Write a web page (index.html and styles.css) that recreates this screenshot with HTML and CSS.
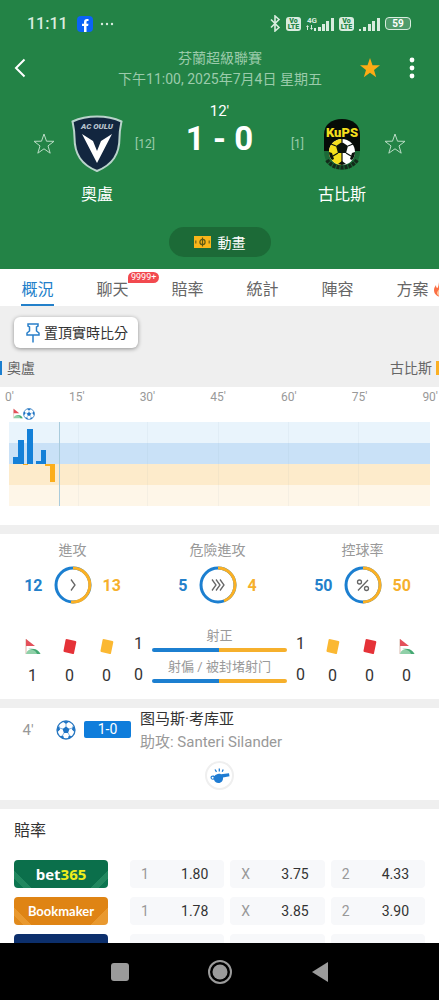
FILE: index.html
```html
<!DOCTYPE html>
<html lang="zh-Hant">
<head>
    <meta charset="UTF-8">
    <meta name="viewport" content="width=device-width, initial-scale=1.0">
    <title>奧盧 1 - 0 古比斯</title>
    <link rel="stylesheet" href="styles.css">
</head>
<body>
    <!-- Shared icons -->
    <svg class="sprite" aria-hidden="true">
        <symbol id="star" viewBox="0 0 22 22">
            <path d="M11 1l2.500 7.200 7.500.1-6 4.600 2.200 7.300L11 15.800l-6.200 4.400L7 12.900 1 8.300l7.500-.1z"/>
        </symbol>
        <symbol id="ball" viewBox="0 0 20 20">
            <circle cx="10" cy="10" r="9" fill="#fff" stroke="#2a78c0" stroke-width="1.300"/>
            <path fill="#1f74c4" d="M10 6.500l3.400 2.500-1.300 4H7.900L6.600 9zM6.500 1.300h7L10 4zM1 7.500L3.200 6l.9 3.600-2.800 2.600zM19 7.500L16.800 6l-.9 3.600 2.800 2.600zM3.500 16l3.800-.3.800 3-2.500-.4zM16.500 16l-3.800-.3-.8 3 2.500-.4z"/>
            <path fill="none" stroke="#5b9bd6" stroke-width=".8" d="M10 7V3.500M13 9l3.500-1M12 13l2 3.200M8 13l-2 3.200M7 9L3.500 8"/>
        </symbol>
        <symbol id="corner" viewBox="0 0 16 17">
            <path d="M1 1v15" stroke="#d9b8ac"/>
            <path d="M1 1l9 7H1z" fill="#e3505a"/>
            <path d="M1 16c1-4 4-5 7-5 4 0 6 2 7.500 5z" fill="#8fd0a8"/>
            <path d="M3 11c5 0 8 2 9 5h3.500C13 11.500 9 10 3 11z" fill="#45a873"/>
        </symbol>
        <symbol id="card" viewBox="0 0 14 16">
            <path d="M3.500.5l9 2a1 1 0 0 1 .8 1.200L11 14.700a1 1 0 0 1-1.200.8l-8.500-2a1 1 0 0 1-.8-1.200L2.600 1.200a1 1 0 0 1 .9-.7z"/>
        </symbol>
    </svg>

    <header class="match-header">
        <div class="status-bar">
            <span class="clock">11:11</span>
            <svg class="fb" viewBox="0 0 16 16">
                <rect width="16" height="16" rx="4" fill="#0b63f6"/>
                <path d="M7 16v-6H5V7.700h2V6.200C7 4.100 8.200 3 10 3l1.500.1v2h-1C9.700 5.100 9.500 5.600 9.500 6.300v1.400h2L11.100 10H9.500v6z" fill="#fff"/>
            </svg>
            <svg class="more" viewBox="0 0 14 4" fill="#d9ecdf">
                <circle cx="2" cy="2" r="1.200"/><circle cx="7" cy="2" r="1.200"/><circle cx="12" cy="2" r="1.200"/>
            </svg>
            <div class="status-icons">
                <svg width="11" height="17" viewBox="0 0 11 17" fill="none" stroke="#d9ecdf" stroke-width="1.600">
                    <path d="M1 4.500l8 8-4 3.500V1l4 3.500-8 8"/>
                </svg>
                <span class="volte">Vo<br>LTE</span>
                <svg width="28" height="16" viewBox="0 0 28 16" fill="#d9ecdf">
                    <text x="1" y="7" font-size="8" font-weight="700">4G</text>
                    <path d="M0 11l1.500-2L3 11H2v3H1v-3zM4 12h1V9h1v3h1l-1.500 2zM8 12h2v3H8zM12 11h3v4h-3zM16 8h3v7h-3zM20 5h3v10h-3zM25 2h3v13h-3z"/>
                </svg>
                <span class="volte">Vo<br>LTE</span>
                <svg width="21" height="16" viewBox="0 0 21 16" fill="#d9ecdf">
                    <path d="M0 13h2v2H0zM4 11h3v4H4zM9 8h3v7H9zM13 5h3v10h-3zM18 2h3v13h-3z"/>
                </svg>
                <span class="battery">59</span>
            </div>
        </div>

        <div class="top-bar">
            <button class="icon-btn" aria-label="返回">
                <svg width="12" height="20" viewBox="0 0 12 20" fill="none" stroke="#fff" stroke-width="2">
                    <path d="M10.500 1.500L2 10l8.500 8.500"/>
                </svg>
            </button>
            <div class="league">
                <p>芬蘭超級聯賽</p>
                <p>下午11:00, 2025年7月4日 星期五</p>
            </div>
            <button class="icon-btn favourite" aria-label="收藏">
                <svg width="22" height="22"><use href="#star"/></svg>
            </button>
            <button class="icon-btn" aria-label="更多">
                <svg width="6" height="22" viewBox="0 0 6 22" fill="#fff">
                    <circle cx="3" cy="3" r="2.400"/><circle cx="3" cy="11" r="2.400"/><circle cx="3" cy="19" r="2.400"/>
                </svg>
            </button>
        </div>

        <div class="scoreboard">
            <div class="team">
                <button class="icon-btn follow" aria-label="關注奧盧">
                    <svg width="22" height="22"><use href="#star"/></svg>
                </button>
                <svg class="crest" viewBox="0 0 52 58">
                    <path d="M26 1.500c9 0 17 1.500 24.500 5-1 5-2 9-2 16 0 17-7 27-22.500 33.500C10.500 49.500 3.500 39.500 3.500 22.500c0-7-1-11-2-16C9 3 17 1.500 26 1.500z" fill="#12263f" stroke="#b9d3cb" stroke-width="2"/>
                    <path d="M11 19l11 7 4 10 4-10 11-7-15 29z" fill="#fff"/>
                    <text x="26" y="14" font-size="8" font-weight="900" font-style="italic" text-anchor="middle" fill="#b7c3cd">AC OULU</text>
                </svg>
                <span class="rank">[12]</span>
                <strong class="team-name">奧盧</strong>
            </div>
            <div class="score">
                <span class="minute">12'</span>
                <strong>1 - 0</strong>
            </div>
            <div class="team away">
                <span class="rank">[1]</span>
                <svg class="crest" viewBox="0 0 52 58">
                    <path d="M8 36V20C8 9 16 4 26 4s18 5 18 16v16c0 12-8 19-18 19S8 48 8 36z" fill="#1c6a37"/>
                    <path d="M8 36V20C8 9 16 4 26 4s18 5 18 16v16z" fill="#060b07"/>
                    <path d="M11 45c6 10 24 10 30 0" fill="none" stroke="#132a1a" stroke-width="4" stroke-dasharray="3 1"/>
                    <circle cx="26" cy="37" r="13" fill="#fff"/>
                    <path d="M26 24v26a13 13 0 0 1 0-26z" fill="#f4df1d"/>
                    <path d="M26 27l6 4-2 7h-8l-2-7z" fill="#0a120c"/>
                    <path d="M13 37l3 1 2 6-2 1c-2-2-3-5-3-8zM39 37l-3 1-2 6 2 1c2-2 3-5 3-8zM22 49l4-3 4 3-4 1z" fill="#0a120c"/>
                    <path d="M26 27v-3M20 31l-5-2M32 31l5-2M22 38l-5 3M30 38l5 3M26 38v9" stroke="#0a120c" stroke-width="1.200"/>
                    <text x="26" y="22" font-size="13" font-weight="900" text-anchor="middle" fill="#f4df1d">KuPS</text>
                </svg>
                <button class="icon-btn follow" aria-label="關注古比斯">
                    <svg width="22" height="22"><use href="#star"/></svg>
                </button>
                <strong class="team-name">古比斯</strong>
            </div>
        </div>

        <button class="animation-btn">
            <svg width="17" height="12" viewBox="0 0 17 12">
                <rect width="17" height="12" fill="#f9b61a"/>
                <path d="M8.500 1.500v9" stroke="#5b5714" stroke-width="1.200"/>
                <circle cx="8.500" cy="6" r="2.600" fill="none" stroke="#5b5714" stroke-width="1.200"/>
                <path d="M1 4.500h1.500v3H1zM14.500 4.500H16v3h-1.500z" fill="#8c741a"/>
            </svg>
            動畫
        </button>
    </header>

    <nav class="tabs">
        <a href="#overview" class="tab active">概況</a>
        <a href="#chat" class="tab">聊天<span class="badge">9999+</span></a>
        <a href="#odds" class="tab">賠率</a>
        <a href="#stats" class="tab">統計</a>
        <a href="#lineup" class="tab">陣容</a>
        <a href="#tips" class="tab">方案
            <svg class="flame" viewBox="0 0 14 18">
                <path d="M7 0c1 4 6 6 6 11 0 4-3 6.500-6 6.500S1 15 1 11c0-2 1-3.500 2-5 0 2 .5 3 1.500 3C6 7 5.500 3 7 0z" fill="#fb6f45"/>
                <path d="M7 9c1 2 3 3 3 5 0 2-1.500 3-3 3s-3-1-3-3 2-3 3-5z" fill="#ffc9a0"/>
            </svg>
        </a>
    </nav>

    <main class="content" id="overview">
        <div class="pin-row">
            <button class="pin-btn">
                <svg width="14" height="20" viewBox="0 0 14 20" fill="none" stroke="#2a7fc9" stroke-width="1.500">
                    <path d="M2 1h10v2l-1.500 1v4L13 10v2H1v-2l2.500-2V4L2 3zM7 12v7.500"/>
                </svg>
                置頂實時比分
            </button>
        </div>

        <div class="teams-legend">
            <span class="home">奧盧</span>
            <span class="guest">古比斯</span>
        </div>

        <section class="timeline">
            <div class="minutes">
                <span>0'</span><span>15'</span><span>30'</span><span>45'</span><span>60'</span><span>75'</span><span>90'</span>
            </div>
            <div class="incidents">
                <svg width="10" height="11"><use href="#corner"/></svg>
                <svg width="12" height="12"><use href="#ball"/></svg>
            </div>
            <svg class="momentum" viewBox="0 0 421 84" preserveAspectRatio="none" shape-rendering="crispEdges">
                <rect width="421" height="21" fill="#e9f4fc"/>
                <rect y="21" width="421" height="21" fill="#c9e1f7"/>
                <rect y="42" width="421" height="21" fill="#fdebcb"/>
                <rect y="63" width="421" height="21" fill="#fef6e8"/>
                <path d="M69 0v84M138 0v84M209 0v84M279 0v84M349 0v84" stroke="#8099aa" stroke-opacity=".07"/>
                <path d="M50 0v84" stroke="#a9cbdc"/>
                <path d="M4 35h5V18h6v24H4zM18 7h6v35h-6zM27 39h5V28h5v14H27z" fill="#1480d8"/>
                <path d="M14 42h5v1h-5zM36 42h10v18h-5V44h-5z" fill="#fcae1c"/>
            </svg>
        </section>

        <section class="panel stats" id="stats">
            <div class="gauges">
                <div class="gauge">
                    <h3>進攻</h3>
                    <b class="blue">12</b>
                    <svg class="ring" viewBox="0 0 38 38">
                        <circle cx="19" cy="19" r="17" stroke="#1c7fd0"/>
                        <path d="M19 2a17 17 0 1 1-2 33.900" stroke="#fbb024"/>
                        <path class="glyph" d="M17 13.500l4 5.500-4 5.500"/>
                    </svg>
                    <b class="yellow">13</b>
                </div>
                <div class="gauge">
                    <h3>危險進攻</h3>
                    <b class="blue">5</b>
                    <svg class="ring" viewBox="0 0 38 38">
                        <circle cx="19" cy="19" r="17" stroke="#1c7fd0"/>
                        <path d="M19 2a17 17 0 0 1 6 32.900" stroke="#fbb024"/>
                        <path class="glyph" d="M13 13.500l4 5.500-4 5.500M17 13.500l4 5.500-4 5.500M21 13.500l4 5.500-4 5.500"/>
                    </svg>
                    <b class="yellow">4</b>
                </div>
                <div class="gauge">
                    <h3>控球率</h3>
                    <b class="blue">50</b>
                    <svg class="ring" viewBox="0 0 38 38">
                        <circle cx="19" cy="19" r="17" stroke="#1c7fd0"/>
                        <path d="M19 2a17 17 0 0 1 0 34" stroke="#fbb024"/>
                        <path class="glyph" d="M24 14L14 24.500M17.500 16a2 2 0 1 1-4 0 2 2 0 0 1 4 0zM24.500 22.500a2 2 0 1 1-4 0 2 2 0 0 1 4 0z"/>
                    </svg>
                    <b class="yellow">50</b>
                </div>
            </div>

            <div class="counts">
                <div class="count"><svg class="corner"><use href="#corner"/></svg>1</div>
                <div class="count"><svg class="card red"><use href="#card"/></svg>0</div>
                <div class="count"><svg class="card amber"><use href="#card"/></svg>0</div>
                <div class="shots">
                    <span>1</span>
                    <div class="shot-bar">射正</div>
                    <span>1</span>
                    <span>0</span>
                    <div class="shot-bar">射偏 / 被封堵射门</div>
                    <span>0</span>
                </div>
                <div class="count"><svg class="card amber"><use href="#card"/></svg>0</div>
                <div class="count"><svg class="card red"><use href="#card"/></svg>0</div>
                <div class="count"><svg class="corner"><use href="#corner"/></svg>0</div>
            </div>
        </section>

        <section class="panel events">
            <div class="event">
                <span class="event-time">4'</span>
                <svg width="20" height="20"><use href="#ball"/></svg>
                <span class="event-score">1-0</span>
                <div class="event-text" lang="zh-Hans">
                    <p>图马斯·考库亚</p>
                    <p class="assist">助攻: Santeri Silander</p>
                </div>
            </div>
            <div class="whistle">
                <svg width="20" height="16" viewBox="0 0 20 16">
                    <path d="M6.500 6.500C8 5.500 10 5.800 11 6.200l8-1 .5 3-6.500 1.300c.3 3-1.500 5.500-4.500 5.500-2.500 0-4-1.500-4.500-3.500-2 .6-3.500-.4-3.500-1.900 0-1.700 2-2.600 4-1.600.5-.7 1.200-1.200 2-1.500z" fill="#1f7cd3"/>
                    <circle cx="2.600" cy="9.700" r="1" fill="#fff"/>
                    <path d="M6.500 3.800L5 1.500M9.300 3.500V.5M12.200 3.800l1-2.300" stroke="#1f7cd3" stroke-width="1.300"/>
                </svg>
            </div>
        </section>

        <section class="panel odds" id="odds">
            <h2>賠率</h2>
            <table>
                <tr>
                    <th scope="row"><a href="#bet365" class="brand bet365">bet<em>365</em></a></th>
                    <td><button class="odd"><span>1</span>1.80</button></td>
                    <td><button class="odd"><span>X</span>3.75</button></td>
                    <td><button class="odd"><span>2</span>4.33</button></td>
                </tr>
                <tr>
                    <th scope="row"><a href="#bookmaker" class="brand bookmaker">Bookmaker</a></th>
                    <td><button class="odd"><span>1</span>1.78</button></td>
                    <td><button class="odd"><span>X</span>3.85</button></td>
                    <td><button class="odd"><span>2</span>3.90</button></td>
                </tr>
                <tr>
                    <th scope="row"><span class="brand navy"></span></th>
                    <td><span class="odd"></span></td>
                    <td><span class="odd"></span></td>
                    <td><span class="odd"></span></td>
                </tr>
            </table>
        </section>
    </main>

    <footer class="system-nav">
        <button aria-label="最近">
            <svg width="18" height="18" viewBox="0 0 18 18"><rect width="18" height="18" rx="3" fill="#9b9b9b"/></svg>
        </button>
        <button aria-label="主頁">
            <svg width="24" height="24" viewBox="0 0 24 24">
                <circle cx="12" cy="12" r="11" fill="none" stroke="#9b9b9b" stroke-width="2"/>
                <circle cx="12" cy="12" r="7.500" fill="#9b9b9b"/>
            </svg>
        </button>
        <button aria-label="返回上一頁">
            <svg width="18" height="20" viewBox="0 0 18 20"><path d="M1 10L17 0v20z" fill="#9b9b9b"/></svg>
        </button>
    </footer>
</body>
</html>
```

FILE: styles.css
```css
* {
    margin: 0;
    padding: 0;
    box-sizing: border-box;
}

body {
    font-family: Roboto, 'Noto Sans CJK TC', sans-serif;
    font-size: 16px;
    color: #333;
    background: #efefef;
    height: 100vh;
    display: flex;
    flex-direction: column;
    overflow: hidden;
}

button {
    font: inherit;
    color: inherit;
    background: none;
    border: none;
    cursor: pointer;
}

a {
    color: inherit;
    text-decoration: none;
}

svg {
    display: block;
    flex: none;
}

.sprite {
    position: absolute;
    width: 0;
    height: 0;
}

/* Header */
.match-header {
    background: #238346;
    color: #fff;
    display: flex;
    flex-direction: column;
    padding-bottom: 12px;
}

.status-bar {
    display: flex;
    align-items: center;
    height: 47px;
    padding: 0 28px 0 27px;
    color: #d9ecdf;
}

.clock {
    font-size: 16px;
    font-weight: 500;
}

.fb {
    width: 16px;
    height: 16px;
    margin: 0 7px 0 9px;
}

.more {
    width: 14px;
    height: 4px;
}

.status-icons {
    margin-left: auto;
    display: flex;
    align-items: center;
    gap: 5px;
}

.volte {
    width: 15px;
    height: 14px;
    border-radius: 3px;
    background: #d9ecdf;
    color: #238346;
    font-size: 7px;
    line-height: 6px;
    font-weight: 900;
    text-align: center;
    padding-top: 1px;
}

.battery {
    width: 26px;
    height: 13px;
    border: 1px solid #d9ecdf;
    border-radius: 4px;
    background: rgba(255, 255, 255, 0.2);
    color: #fff;
    font-size: 10px;
    line-height: 11px;
    font-weight: 700;
    text-align: center;
}

.top-bar {
    display: flex;
    align-items: center;
    height: 42px;
    padding: 0 9px 0 8px;
}

.icon-btn {
    width: 24px;
    height: 30px;
    display: flex;
    align-items: center;
    justify-content: center;
}

.league {
    flex: 1;
    padding: 1px 0 0 53px;
    text-align: center;
    font-size: 14px;
    line-height: 21px;
    color: #9bcbab;
    white-space: nowrap;
}

.favourite {
    width: 30px;
    margin-right: 9px;
    fill: #fdab15;
}

.top-bar .icon-btn:last-child {
    width: 36px;
}

.scoreboard {
    display: flex;
    justify-content: space-between;
    padding: 13px 29px 0;
}

.team {
    display: grid;
    grid-template-columns: 30px 56px 24px;
    grid-template-rows: 84px 18px;
    column-gap: 10px;
    align-items: center;
    justify-items: center;
}

.away {
    grid-template-columns: 24px 56px 30px;
}

.follow {
    fill: none;
    stroke: #b9dcc4;
    stroke-width: 1;
}

.crest {
    width: 52px;
    height: 58px;
}

.rank {
    justify-self: start;
    font-size: 12px;
    color: #9bcbab;
}

.away .rank {
    justify-self: end;
}

.team-name {
    grid-column: 2;
    font-weight: 400;
    line-height: 18px;
    white-space: nowrap;
}

.score {
    display: flex;
    flex-direction: column;
    align-items: center;
}

.minute {
    font-size: 15px;
    line-height: 18px;
}

.score strong {
    font-size: 33px;
    line-height: 38px;
    font-weight: 700;
}

.animation-btn {
    align-self: center;
    display: flex;
    align-items: center;
    gap: 7px;
    height: 30px;
    margin-top: 23px;
    padding: 0 25px;
    border-radius: 15px;
    background: #1c6a37;
    font-size: 14px;
}

/* Tabs */
.tabs {
    display: flex;
    background: #fff;
    overflow: hidden;
    flex: none;
}

.tab {
    flex: 0 0 75px;
    display: flex;
    justify-content: center;
    position: relative;
    height: 37px;
    line-height: 41px;
    color: #666;
}

.tab.active {
    color: #2380ca;
}

.tab.active::after {
    content: '';
    position: absolute;
    bottom: 0;
    width: 33px;
    height: 2px;
    background: #2380ca;
}

.badge {
    position: absolute;
    left: 53px;
    top: 3px;
    padding: 0 3px;
    border-radius: 6px 6px 6px 0;
    background: #f2494f;
    color: #fff;
    font-size: 9px;
    line-height: 11px;
}

.flame {
    position: absolute;
    left: 58px;
    top: 10px;
    width: 14px;
    height: 18px;
}

/* Overview */
.content {
    flex: 1;
    min-height: 0;
    overflow: hidden;
}

.pin-row {
    padding: 11px 14px 9px;
}

.pin-btn {
    display: flex;
    align-items: center;
    gap: 4px;
    height: 31px;
    padding: 0 10px 0 12px;
    border-radius: 6px;
    background: #fff;
    box-shadow: 0 1px 4px rgba(0, 0, 0, 0.4);
    font-size: 14px;
    line-height: 20px;
}

.teams-legend {
    display: flex;
    justify-content: space-between;
    height: 30px;
    font-size: 14px;
    line-height: 14px;
    color: #666;
    padding-top: 4px;
}

.home {
    height: 14px;
    border-left: 2px solid #1c7fd0;
    padding-left: 5px;
}

.guest {
    height: 14px;
    border-right: 3px solid #fbb024;
    padding-right: 4px;
}

.timeline {
    background: #fff;
    padding-bottom: 19px;
}

.minutes {
    display: flex;
    justify-content: space-between;
    padding: 2px 1px 0 5px;
    font-size: 12px;
    line-height: 16px;
    color: #999;
}

.incidents {
    display: flex;
    align-items: center;
    height: 17px;
    padding-left: 13px;
}

.momentum {
    width: calc(100% - 18px);
    height: 84px;
    margin: 0 9px;
}

.panel {
    background: #fff;
    margin-top: 9px;
}

.stats {
    padding-bottom: 13px;
}

.gauges {
    display: grid;
    grid-template-columns: repeat(3, 1fr);
    padding: 6px 4px 0 0;
}

.gauge {
    display: grid;
    grid-template-columns: 1fr 38px 1fr;
    align-items: center;
    column-gap: 11px;
}

.gauge h3 {
    grid-column: 1 / 4;
    text-align: center;
    font-size: 14px;
    line-height: 20px;
    font-weight: 400;
    color: #999;
    margin-bottom: 6px;
}

.blue {
    color: #2380ca;
    font-weight: 700;
    text-align: right;
}

.yellow {
    color: #f6b02c;
    font-weight: 700;
}

.ring {
    width: 38px;
    height: 38px;
    fill: none;
    stroke-width: 3;
}

.ring .glyph {
    stroke: #666;
    stroke-width: 1.3;
}

.counts {
    display: grid;
    grid-template-columns: repeat(3, 37px) 1fr repeat(3, 37px);
    padding: 20px 14px 0;
}

.count {
    display: flex;
    flex-direction: column;
    align-items: center;
    gap: 11px;
    padding-top: 14px;
    line-height: 20px;
}

.corner {
    width: 16px;
    height: 17px;
}

.card {
    width: 14px;
    height: 17px;
}

.red {
    fill: #e53238;
}

.amber {
    fill: #fbb832;
}

.shots {
    display: grid;
    grid-template-columns: 27px 1fr 27px;
    grid-template-rows: 31px 31px;
    text-align: center;
    line-height: 20px;
}

.shots span {
    padding-top: 10px;
}

.shot-bar {
    font-size: 13px;
    line-height: 24px;
    color: #999;
    white-space: nowrap;
}

.shot-bar::after {
    content: '';
    display: block;
    height: 4px;
    border-radius: 2px;
    background: linear-gradient(to right, #1c7fd0 50%, #f6b02c 50%);
}

/* Events */
.events {
    padding-bottom: 10px;
}

.event {
    display: grid;
    grid-template-columns: 56px 28px 47px 1fr;
    align-items: center;
    height: 53px;
}

.event > svg,
.event-time,
.event-score {
    margin-bottom: 10px;
}

.event-time {
    text-align: center;
    color: #999;
    font-size: 15px;
}

.event-score {
    background: #0f7ddb;
    color: #fff;
    border-radius: 2px;
    font-size: 14px;
    line-height: 17px;
    text-align: center;
}

.event-text {
    font-family: Roboto, 'Noto Sans CJK SC', sans-serif;
    font-size: 15px;
    line-height: 23px;
    padding: 0 0 7px 9px;
}

.assist {
    color: #999;
}

.whistle {
    width: 29px;
    height: 29px;
    margin: 0 auto;
    border: 2px solid #efefef;
    border-radius: 50%;
    display: flex;
    align-items: center;
    justify-content: center;
}

/* Odds */
.odds h2 {
    padding: 10px 14px 11px;
    font-size: 16px;
    line-height: 24px;
    font-weight: 400;
}

.odds table {
    width: calc(100% - 16px);
    margin: -3px 8px 0;
    table-layout: fixed;
    border-collapse: separate;
    border-spacing: 6px 9px;
}

.odds th {
    width: 110px;
    padding-right: 16px;
}

.brand {
    display: block;
    height: 28px;
    border-radius: 4px;
    color: #fff;
    font-family: 'Open Sans', sans-serif;
    line-height: 28px;
    text-align: center;
}

.bet365 {
    background: linear-gradient(45deg, #0b7550 8%, #21875f 8%, #21875f 14%, transparent 14%), linear-gradient(-45deg, #0b7550 8%, #21875f 8%, #21875f 14%, #0b6f4b 14%);
    font-size: 15px;
    font-weight: 700;
}

.bet365 em {
    font-style: normal;
    color: #f0ee1c;
}

.bookmaker {
    background: linear-gradient(45deg, #e08a1c 8%, #e9992f 8%, #e9992f 14%, transparent 14%), linear-gradient(-45deg, #e9992f 14%, #df8414 14%);
    font-family: Lato, sans-serif;
    font-size: 13px;
    font-weight: 700;
}

.navy {
    background: #0c2f6c;
}

.odd {
    width: 100%;
    height: 28px;
    display: flex;
    align-items: center;
    justify-content: space-between;
    padding: 0 16px 0 11px;
    border-radius: 4px;
    background: #f7f8fa;
    font-size: 14px;
}

.odd span {
    color: #999;
}

/* Android navigation */
.system-nav {
    flex: none;
    height: 57px;
    background: #000;
    display: flex;
    align-items: center;
    justify-content: center;
    gap: 76px;
}

.system-nav button {
    width: 24px;
    display: flex;
    justify-content: center;
}
```
